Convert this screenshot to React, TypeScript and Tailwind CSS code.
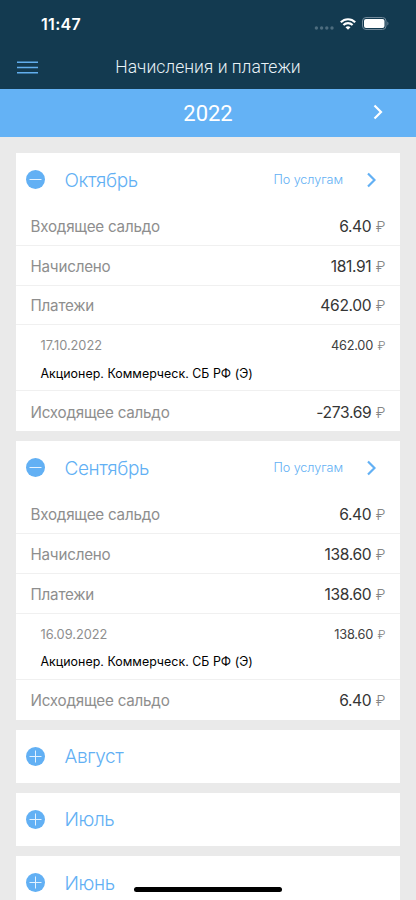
import React from "react";

type Month = {
  name: string;
  opening: string;
  charged: string;
  paid: string;
  date: string;
  closing: string;
};

const openMonths: Month[] = [
  { name: "Октябрь", opening: "6.40", charged: "181.91", paid: "462.00", date: "17.10.2022", closing: "-273.69" },
  { name: "Сентябрь", opening: "6.40", charged: "138.60", paid: "138.60", date: "16.09.2022", closing: "6.40" },
];

const closedMonths = ["Август", "Июль", "Июнь"];

function Toggle({ open }: { open: boolean }) {
  return (
    <svg className="h-[19px] w-[19px] shrink-0" viewBox="0 0 19 19" fill="none">
      <circle cx="9.5" cy="9.5" r="9.5" fill="#62b0f4" />
      <path d={open ? "M3.5 9.5h12" : "M3.5 9.5h12M9.5 3.5v12"} stroke="#e3f2ff" strokeWidth="1" />
    </svg>
  );
}

function Chevron({ className }: { className: string }) {
  return (
    <svg className={className} viewBox="0 0 9 16" fill="none">
      <path d="M1 1.5L7.5 8L1 14.5" stroke="currentColor" strokeWidth="2.2" />
    </svg>
  );
}

function Row({ label, value, last }: { label: string; value: string; last?: boolean }) {
  return (
    <div
      className={
        "flex h-[39.8px] items-center justify-between pl-[14.5px] pr-[14.5px] pt-[2px] " +
        (last ? "" : "border-b border-[#f0f0f0]")
      }
    >
      <span className="pt-[1.5px] text-[15.2px] font-[370] tracking-[-0.22px] text-[#8e8e8e]">{label}</span>
      <span className="text-[15.6px] tracking-[-0.35px] text-[#353535]">
        {value}
        <span className="ml-[4.5px] font-light text-[#858585] text-[14.5px] tracking-normal">₽</span>
      </span>
    </div>
  );
}

function MonthTitle({ name, open }: { name: string; open: boolean }) {
  return (
    <div className="flex h-[53px] items-center pl-[9.5px] pr-[24.5px] text-[#62b0f4]">
      <Toggle open={open} />
      <span className="ml-[20px] grow pt-[2.5px] text-[19px] font-[350] tracking-[-0.4px]">{name}</span>
      {open && (
        <>
          <span className="mr-[23.5px] pt-[1px] text-[12.6px] font-[350] tracking-[-0.05px]">По услугам</span>
          <Chevron className="h-[16px] w-[9px]" />
        </>
      )}
    </div>
  );
}

function MonthCard({ month }: { month: Month }) {
  return (
    <section className="bg-white">
      <MonthTitle name={month.name} open />
      <Row label="Входящее сальдо" value={month.opening} />
      <Row label="Начислено" value={month.charged} />
      <Row label="Платежи" value={month.paid} />
      <div className="h-[66px] border-b border-[#f0f0f0] pl-[24.5px] pr-[14.5px] pt-[11px] text-[12.8px] leading-[20px]">
        <div className="flex justify-between">
          <span className="font-[370] text-[#8e8e8e]">{month.date}</span>
          <span className="text-[#404040] tracking-[-0.25px]">
            {month.paid}
            <span className="ml-[4.5px] font-light text-[#858585] text-[12px] tracking-normal">₽</span>
          </span>
        </div>
        <div className="mt-[7.5px] text-[12.4px] tracking-[0.03px] text-black">
          Акционер. Коммерческ. СБ РФ (Э)
        </div>
      </div>
      <Row label="Исходящее сальдо" value={month.closing} last />
    </section>
  );
}

function StatusBar() {
  return (
    <div className="flex h-[46px] items-center justify-between pl-[41px] pr-[27px] text-white">
      <span className="text-[16px] font-semibold leading-none pt-[1px] tracking-[0.3px]">11:47</span>
      <div className="flex items-center pt-[1px]">
        <svg className="mt-[8px] mr-[6px] h-[4px] w-[20px]" viewBox="0 0 20 4" fill="#4d6c7e">
          <circle cx="2.4" cy="2" r="1.7" />
          <circle cx="7.6" cy="2" r="1.7" />
          <circle cx="12.8" cy="2" r="1.7" />
          <circle cx="18" cy="2" r="1.7" />
        </svg>
        <svg className="mr-[6px] h-[12px] w-[16px]" viewBox="0 0 16 12" fill="none" stroke="white" strokeWidth="2.1">
          <path d="M0.8 4.3C4.8 0.2 11.2 0.2 15.2 4.3" />
          <path d="M3.4 7.1C6 4.5 10 4.5 12.6 7.1" />
          <path d="M8 11.8L5.5 9.2C6.9 7.9 9.1 7.9 10.5 9.2Z" fill="white" stroke="none" />
        </svg>
        <svg className="h-[13px] w-[27px]" viewBox="0 0 27 13" fill="none">
          <rect x="0.5" y="0.5" width="23.5" height="12" rx="3.5" stroke="#71899a" />
          <rect x="2" y="2" width="20.5" height="9" rx="2" fill="white" />
          <path d="M25.4 4.5C26.8 5.2 26.8 7.8 25.4 8.5Z" fill="#71899a" />
        </svg>
      </div>
    </div>
  );
}

export default function App() {
  return (
    <div className="relative h-[900px] w-[416px] overflow-hidden bg-[#eaeaea] font-['Inter','Noto_Sans',sans-serif]">
      <header className="h-[89px] bg-[#133a50]">
        <StatusBar />
        <div className="grid h-[42px] grid-cols-[60px_1fr_60px] items-center">
          <svg className="ml-[17px] h-[13px] w-[21px]" viewBox="0 0 21 13" stroke="#62aeed" strokeWidth="1.6">
            <path d="M0 1.3h21M0 6.5h21M0 11.7h21" />
          </svg>
          <h1 className="text-center font-['Roboto',sans-serif] text-[17.5px] font-light text-[#e9f3f8]">
            Начисления и платежи
          </h1>
        </div>
      </header>
      <div className="grid h-[48px] grid-cols-[60px_1fr_60px] items-center bg-[#64b2f5] text-white">
        <span />
        <span className="text-center font-['Roboto',sans-serif] text-[22px]">2022</span>
        <Chevron className="ml-[17px] -mt-[3px] h-[16px] w-[10px]" />
      </div>
      <main className="flex flex-col gap-[10.2px] px-[16px] pt-[16px]">
        {openMonths.map((m) => (
          <MonthCard key={m.name} month={m} />
        ))}
        {closedMonths.map((name) => (
          <section key={name} className="bg-white">
            <MonthTitle name={name} open={false} />
          </section>
        ))}
      </main>
      <div className="absolute bottom-[8px] left-[134px] h-[5px] w-[148px] rounded-full bg-black" />
    </div>
  );
}
